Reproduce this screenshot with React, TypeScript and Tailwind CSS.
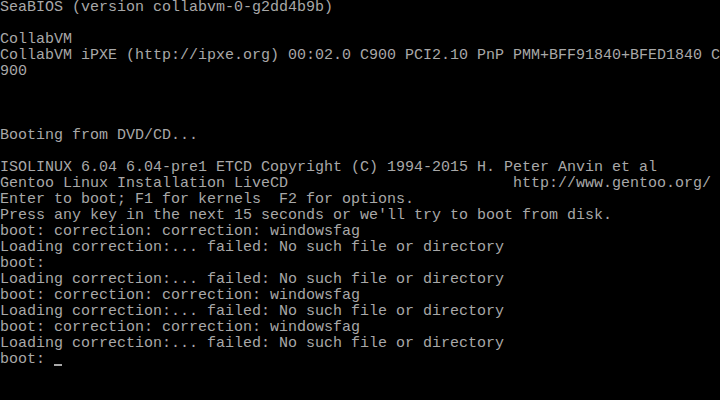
import React from "react";

const rows: string[] = [
    "SeaBIOS (version collabvm-0-g2dd4b9b)",
    "",
    "CollabVM",
    "CollabVM iPXE (http://ipxe.org) 00:02.0 C900 PCI2.10 PnP PMM+BFF91840+BFED1840 C",
    "900",
    "",
    "",
    "",
    "Booting from DVD/CD...",
    "",
    "ISOLINUX 6.04 6.04-pre1 ETCD Copyright (C) 1994-2015 H. Peter Anvin et al",
    "Gentoo Linux Installation LiveCD                         http://www.gentoo.org/",
    "Enter to boot; F1 for kernels  F2 for options.",
    "Press any key in the next 15 seconds or we'll try to boot from disk.",
    "boot: correction: correction: windowsfag",
    "Loading correction:... failed: No such file or directory",
    "boot:",
    "Loading correction:... failed: No such file or directory",
    "boot: correction: correction: windowsfag",
    "Loading correction:... failed: No such file or directory",
    "boot: correction: correction: windowsfag",
    "Loading correction:... failed: No such file or directory",
];

const App: React.FC = () => {
    return (
        <div className="w-[720px] h-[400px] bg-black overflow-hidden text-[#a8a8a8] text-[15px] leading-4 font-['Liberation_Mono',monospace]">
            {rows.map((line, i) => (
                <div key={i} className="h-4 whitespace-pre">{line}</div>
            ))}
            <div className="h-4 whitespace-pre flex">
                <span>boot: </span>
                <span className="w-[9px] h-4 flex flex-col justify-end pb-[2px]">
                    <span className="block w-[8px] h-[2px] bg-[#a8a8a8]" />
                </span>
            </div>
        </div>
    );
};

export default App;
